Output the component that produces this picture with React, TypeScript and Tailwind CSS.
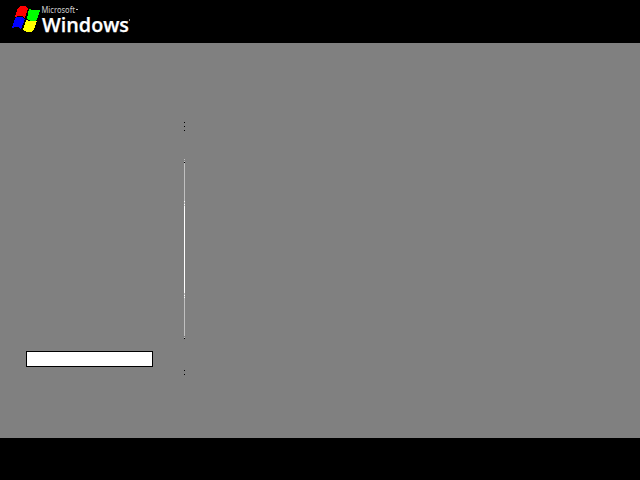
const segments: [string, string][] = [
  ["h-px", "bg-black"],
  ["h-[3px]", "bg-transparent"],
  ["h-px", "bg-black"],
  ["h-[3px]", "bg-transparent"],
  ["h-px", "bg-black"],
  ["h-[28px]", "bg-transparent"],
  ["h-px", "bg-[#c0c0c0]"],
  ["h-px", "bg-transparent"],
  ["h-px", "bg-[#c0c0c0]"],
  ["h-px", "bg-black"],
  ["h-[38px]", "bg-[#c0c0c0]"],
  ["h-px", "bg-white"],
  ["h-[2px]", "bg-[#c0c0c0]"],
  ["h-px", "bg-white"],
  ["h-px", "bg-[#c0c0c0]"],
  ["h-[87px]", "bg-white"],
  ["h-[2px]", "bg-[#c0c0c0]"],
  ["h-px", "bg-white"],
  ["h-px", "bg-[#c0c0c0]"],
  ["h-px", "bg-white"],
  ["h-[38px]", "bg-[#c0c0c0]"],
  ["h-px", "bg-transparent"],
  ["h-px", "bg-[#c0c0c0]"],
  ["h-px", "bg-black"],
  ["h-[31px]", "bg-transparent"],
  ["h-px", "bg-black"],
  ["h-[3px]", "bg-transparent"],
  ["h-px", "bg-black"],
];

function WindowsLogo() {
  return (
    <svg width="140" height="43" viewBox="0 0 140 43" aria-label="Microsoft Windows">
      <g shapeRendering="crispEdges">
        <path fill="#ff0000" d="M18 8L20 6H25L28 8L25 18L22 16H18L15 17Z" />
        <path fill="#00ff00" d="M29 9L32 10H36L40 10L37 20L35 21H31L27 19Z" />
        <path fill="#0000ff" d="M15 18L17 17H22L25 19L21 29L18 27H15L12 28Z" />
        <path fill="#ffff00" d="M26 20L30 21H34L37 21L34 30L31 32H27L23 30Z" />
      </g>
      <text x="41.5" y="13" fill="#d0d0d0" fontFamily="'Noto Sans', sans-serif" fontSize="8" textLength="33.5" lengthAdjust="spacingAndGlyphs">Microsoft</text>
      <path fill="#c0c0c0" d="M76 9h2v1h-2z" />
      <text x="42" y="32" fill="#ffffff" stroke="#ffffff" strokeWidth="0.25" fontFamily="'Open Sans', sans-serif" fontSize="20.5" fontWeight="600" textLength="87" lengthAdjust="spacingAndGlyphs">Windows</text>
      <path fill="#808080" d="M129 19h1v2h-1z" />
    </svg>
  );
}

export default function App() {
  return (
    <div className="flex h-[480px] w-[640px] flex-col overflow-hidden bg-[#808080]">
      <header className="h-[43px] shrink-0 bg-black">
        <WindowsLogo />
      </header>
      <main className="flex h-[395px] shrink-0">
        <aside className="flex w-[184px] flex-col justify-end pb-[71px] pl-[26px]">
          <div className="h-4 w-[127px] border border-black bg-white" />
        </aside>
        <div className="flex w-px flex-col pt-[79px]">
          {segments.map(([height, color], i) => (
            <div key={i} className={`${height} ${color} shrink-0`} />
          ))}
        </div>
      </main>
      <footer className="flex-1 bg-black" />
    </div>
  );
}
